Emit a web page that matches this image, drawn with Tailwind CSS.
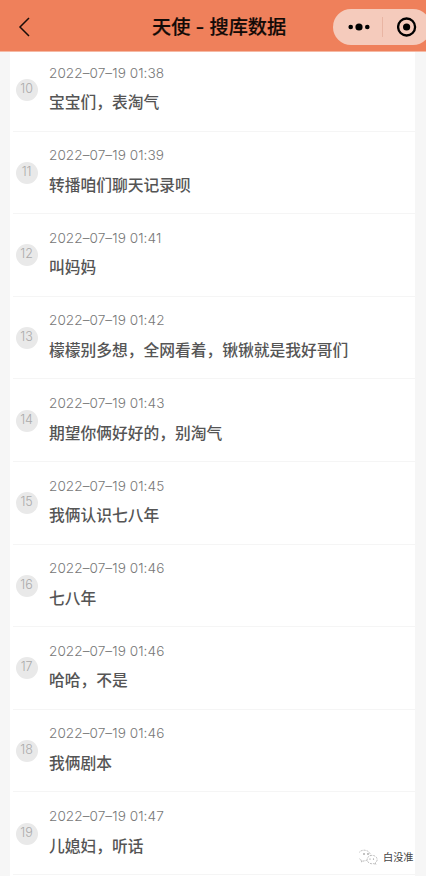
<!DOCTYPE html>
<html lang="zh-CN">
<head>
    <meta charset="UTF-8">
    <meta name="viewport" content="width=device-width, initial-scale=1.0">
    <title>天使 - 搜库数据</title>
    <script src="https://cdn.jsdelivr.net/npm/@tailwindcss/browser@4"></script>
</head>
<body class="bg-[#f6f6f6] h-screen overflow-hidden flex flex-col font-['Inter','Noto_Sans_CJK_SC',sans-serif]">
    <!-- Navigation bar -->
    <header class="h-[52px] shrink-0 bg-[#ef805b] border-b border-[#f5b9a4] flex items-center pl-[18px] pt-[2px]">
        <svg class="w-3 h-5 shrink-0" viewBox="0 0 12 20" fill="none" stroke="#1a0d09" stroke-width="1.5">
            <path d="M11 1 L2 10 L11 19"/>
        </svg>
        <h1 class="ml-[122px] w-[136px] shrink-0 whitespace-nowrap text-[19.2px] leading-7 font-medium text-[#120a07] [-webkit-text-stroke:0.2px_#120a07]">天使 - 搜库数据</h1>
        <div class="ml-[45px] w-[98px] h-9 shrink-0 rounded-full bg-[#f5cbbc] flex items-center">
            <svg class="ml-[15px] w-[22px] h-2 shrink-0" viewBox="0 0 22 8" fill="#000">
                <circle cx="2.7" cy="4" r="2.3"/>
                <circle cx="11" cy="4" r="3.6"/>
                <circle cx="19.3" cy="4" r="2.3"/>
            </svg>
            <div class="ml-3 w-px h-5 bg-[#e9b5a3]"></div>
            <svg class="ml-[14px] w-5 h-5 shrink-0" viewBox="0 0 20 20">
                <circle cx="9.6" cy="10" r="8.5" fill="none" stroke="#000" stroke-width="2.3"/>
                <circle cx="9.6" cy="10" r="3.6"/>
            </svg>
        </div>
    </header>

    <!-- Records -->
    <main class="ml-[10px] mr-[11px] flex-1 min-h-0 overflow-hidden bg-white">
        <div id="records" class="-mt-[3px]"></div>
    </main>

    <!-- Account watermark -->
    <div class="absolute left-[359px] top-[849px] flex items-center gap-[5px]">
        <svg class="w-[19px] h-4" viewBox="0 0 19 16" fill="#fff" stroke="#aaa" stroke-width="0.8" stroke-dasharray="2 1">
            <path d="M3 11.5 L2.5 13 L5 11.8 A6.3 5.3 0 1 0 3 11.5Z"/>
            <path d="M16 14 L17 15.4 L14.5 14.6 A5 4.2 0 1 1 16 14Z"/>
            <g fill="#777" stroke="none">
                <circle cx="5" cy="5" r=".8"/>
                <circle cx="9" cy="5" r=".8"/>
                <circle cx="11" cy="10" r=".6"/>
                <circle cx="14.5" cy="10" r=".6"/>
            </g>
        </svg>
        <span class="text-[10.2px] leading-4 text-[#444] whitespace-nowrap">白没准</span>
    </div>

    <script>
        const records = [
            { id: 10, time: '01:38', text: '宝宝们，表淘气' },
            { id: 11, time: '01:39', text: '转播咱们聊天记录呗' },
            { id: 12, time: '01:41', text: '叫妈妈' },
            { id: 13, time: '01:42', text: '檬檬别多想，全网看着，锹锹就是我好哥们' },
            { id: 14, time: '01:43', text: '期望你俩好好的，别淘气' },
            { id: 15, time: '01:45', text: '我俩认识七八年' },
            { id: 16, time: '01:46', text: '七八年' },
            { id: 17, time: '01:46', text: '哈哈，不是' },
            { id: 18, time: '01:46', text: '我俩剧本' },
            { id: 19, time: '01:47', text: '儿媳妇，听话' },
        ];

        document.getElementById('records').innerHTML = records.map(r => `
            <div class="h-[82.6px] ml-[3px] pl-[2.6px] border-b border-[#f5f5f5] flex items-start">
                <div class="mt-[30.2px] size-[22px] shrink-0 rounded-full bg-[#e9e9e9] text-center text-[12.5px] leading-[19px] font-light text-[#aaa]">${r.id}</div>
                <div class="ml-[11.4px] pt-[13.6px] whitespace-nowrap">
                    <div class="text-[13.6px] leading-5 tracking-[0.06px] font-light text-[#777]">2022–07–19 ${r.time}</div>
                    <div class="mt-[8.6px] text-[15.75px] leading-6 font-medium text-[#555]">${r.text}</div>
                </div>
            </div>
        `).join('');
    </script>
</body>
</html>
